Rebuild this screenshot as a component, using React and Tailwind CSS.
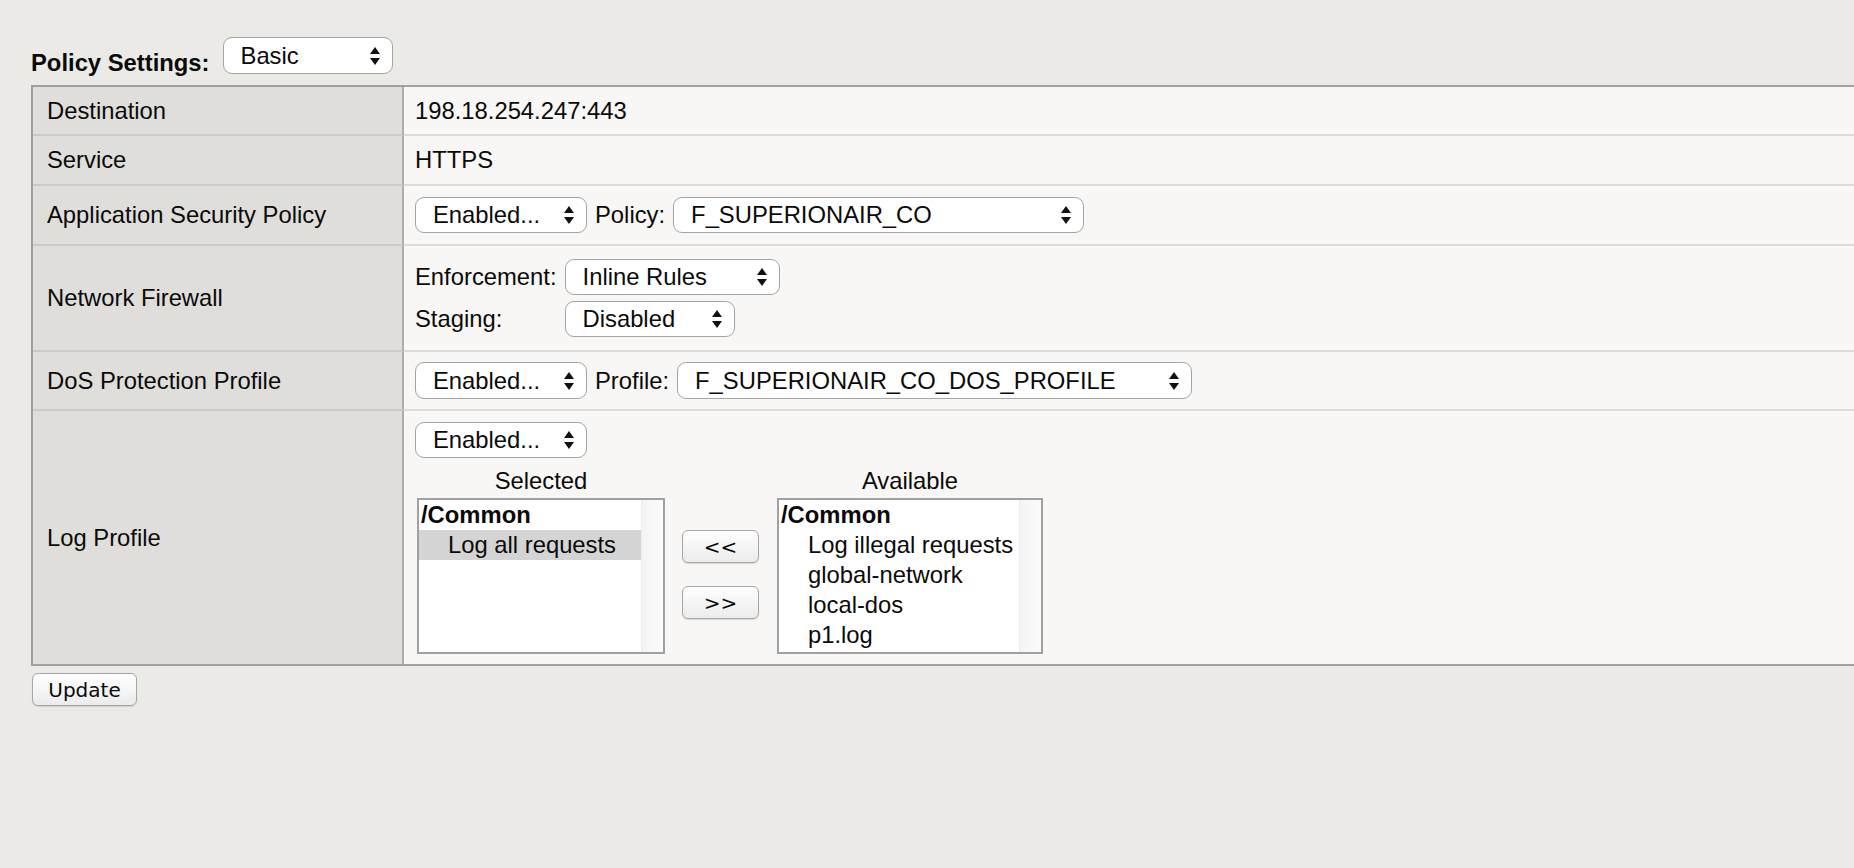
import React from 'react';

const sans = "font-['Liberation_Sans',Arial,sans-serif]";
const lucida = "font-['DejaVu_Sans',sans-serif]";

function Arrows() {
  return (
    <svg width="10" height="18" viewBox="0 0 10 18" className="shrink-0">
      <path d="M5 0L10 7H0Z M0 11H10L5 18Z" fill="#111" />
    </svg>
  );
}

function Select({ value, className }) {
  return (
    <div
      className={`flex items-center justify-between shrink-0 bg-white border border-[#a4a4a4] rounded-[9px] pl-[17px] pr-[12px] ${className}`}
    >
      <span className="whitespace-nowrap">{value}</span>
      <Arrows />
    </div>
  );
}

function Button({ children, className }) {
  return (
    <div
      className={`${lucida} flex items-center justify-center rounded-[6px] border border-[#a6a6a6] bg-gradient-to-b from-white to-[#ebebeb] shadow-[0_1px_1px_rgba(0,0,0,0.12)] ${className}`}
    >
      {children}
    </div>
  );
}

function ListBox({ items, width, listW }) {
  return (
    <div className={`flex h-[156px] border-2 border-[#a0a0a0] bg-white ${width}`}>
      <div className={`${listW} flex flex-col`}>
        {items.map((it) => (
          <div
            key={it.label}
            className={`h-[30px] leading-[30px] whitespace-nowrap
              ${it.group ? 'font-bold pl-[2px]' : 'pl-[29px]'}
              ${it.active ? 'bg-[#d4d4d4]' : ''}`}
          >
            {it.label}
          </div>
        ))}
      </div>
      <div className="flex-1 bg-gradient-to-r from-[#f4f4f4] to-[#fbfbfb] border-l border-[#ececec]" />
    </div>
  );
}

function Row({ label, height, last, children, center = true }) {
  return (
    <div className={`flex ${height}`}>
      <div
        className={`w-[371px] shrink-0 bg-[#dfdedb] border-r-2 border-r-[#adadab] pl-[14px] flex items-center
          ${last ? '' : 'border-b-2 border-b-[#cbcac7]'}`}
      >
        {label}
      </div>
      <div
        className={`flex-1 bg-[#f8f7f5] pl-[11px]
          ${center ? 'flex items-center' : ''}
          ${last ? '' : 'border-b-2 border-b-[#dddcd9]'}`}
      >
        {children}
      </div>
    </div>
  );
}

export default function App() {
  return (
    <div className={`${sans} text-[23.8px] text-[#0a0a0a] bg-[#ebeae6] min-h-screen w-full pt-[37px] overflow-hidden`}>
      {/* heading */}
      <div className="flex items-start pl-[31px]">
        <div className="font-bold leading-[27px] mt-[12px]">Policy Settings:</div>
        <Select value="Basic" className="w-[170px] h-[37px] ml-[13px]" />
      </div>

      {/* settings table */}
      <div className="mt-[9px] ml-[31px] border-t-2 border-l-2 border-b-2 border-[#a0a0a0]">
        <Row label="Destination" height="h-[49px]">198.18.254.247:443</Row>
        <Row label="Service" height="h-[50px]">HTTPS</Row>
        <Row label="Application Security Policy" height="h-[60px]">
          <div className="flex items-center gap-[8px]">
            <Select value="Enabled..." className="w-[172px] h-[36px]" />
            <span>Policy:</span>
            <Select value="F_SUPERIONAIR_CO" className="w-[411px] h-[36px]" />
          </div>
        </Row>
        <Row label="Network Firewall" height="h-[106px]">
          <div className="grid grid-cols-[auto_auto] items-center gap-x-[8px] gap-y-[6px]">
            <span>Enforcement:</span>
            <Select value="Inline Rules" className="w-[215px] h-[36px]" />
            <span>Staging:</span>
            <Select value="Disabled" className="w-[170px] h-[36px]" />
          </div>
        </Row>
        <Row label="DoS Protection Profile" height="h-[59px]">
          <div className="flex items-center gap-[8px]">
            <Select value="Enabled..." className="w-[172px] h-[37px]" />
            <span>Profile:</span>
            <Select value="F_SUPERIONAIR_CO_DOS_PROFILE" className="w-[515px] h-[37px]" />
          </div>
        </Row>
        <Row label="Log Profile" height="h-[253px]" last center={false}>
          <div className="pt-[11px] flex flex-col items-start">
            <Select value="Enabled..." className="w-[172px] h-[36px]" />
            <div className="flex items-start mt-[9px]">
              <div className="ml-[2px] flex flex-col items-center">
                <div className="leading-[27px] h-[27px]">Selected</div>
                <div className="mt-[4px]">
                  <ListBox
                    width="w-[248px]"
                    listW="w-[222px]"
                    items={[
                      { label: '/Common', group: true },
                      { label: 'Log all requests', active: true },
                    ]}
                  />
                </div>
              </div>
              <div className="ml-[17px] pt-[63px] flex flex-col gap-[23px]">
                <Button className="w-[77px] h-[33px] text-[20px]">&lt;&lt;</Button>
                <Button className="w-[77px] h-[33px] text-[20px]">&gt;&gt;</Button>
              </div>
              <div className="ml-[18px] flex flex-col items-center">
                <div className="leading-[27px] h-[27px]">Available</div>
                <div className="mt-[4px]">
                  <ListBox
                    width="w-[266px]"
                    listW="w-[240px]"
                    items={[
                      { label: '/Common', group: true },
                      { label: 'Log illegal requests' },
                      { label: 'global-network' },
                      { label: 'local-dos' },
                      { label: 'p1.log' },
                    ]}
                  />
                </div>
              </div>
            </div>
          </div>
        </Row>
      </div>

      <div className="pl-[32px] mt-[7px]">
        <Button className="w-[105px] h-[33px] text-[20px]">Update</Button>
      </div>
    </div>
  );
}
